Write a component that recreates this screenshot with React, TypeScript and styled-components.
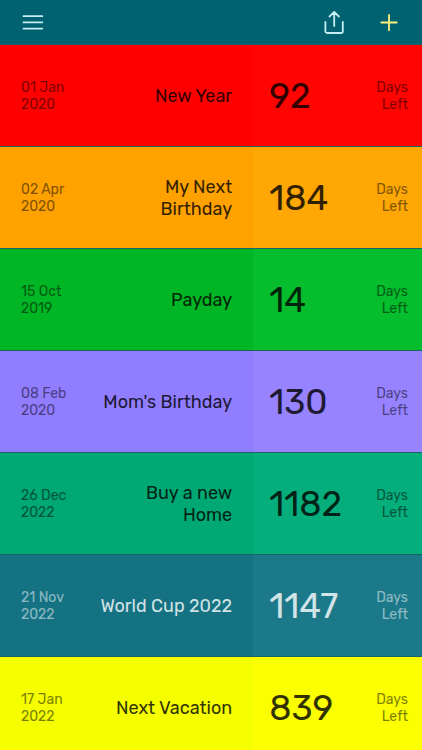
import React from "react";
import styled, { createGlobalStyle } from "styled-components";

const GlobalStyle = createGlobalStyle`
  *, *::before, *::after { box-sizing: border-box; }
  body {
    margin: 0;
    background: #006271;
    font-family: Rubik, Roboto, sans-serif;
  }
`;

const Screen = styled.div`
  display: flex;
  flex-direction: column;
  height: 100vh;
  overflow: hidden;
`;

const Toolbar = styled.header`
  display: flex;
  flex: none;
  align-items: center;
  gap: 23px;
  height: 44px;
  padding: 0 17px;
  background: #006271;
`;

const IconButton = styled.button<{ $tint: string; $pushRight?: boolean }>`
  display: grid;
  place-items: center;
  width: 32px;
  height: 44px;
  margin: 0;
  margin-left: ${(p) => (p.$pushRight ? "auto" : "0")};
  padding: 0;
  border: 0;
  background: none;
  color: ${(p) => p.$tint};
  cursor: pointer;

  svg {
    display: block;
    fill: none;
    stroke: currentColor;
    stroke-linecap: round;
    stroke-linejoin: round;
  }
`;

const Scroller = styled.main`
  flex: 1;
  min-height: 0;
  overflow-y: auto;
  scrollbar-width: none;
`;

const EventList = styled.ul`
  display: grid;
  margin: 0;
  padding: 0;
  list-style: none;
`;

const EventRow = styled.li<{ $left: string; $right: string; $light?: boolean }>`
  display: grid;
  grid-template-columns: 3fr 2fr;
  min-height: 102px;
  color: ${(p) => (p.$light ? "#ffffff" : "#000000")};
  border-top: 1px solid #1a6468;

  > :first-child { background: ${(p) => p.$left}; }
  > :last-child { background: ${(p) => p.$right}; }
`;

const Summary = styled.div`
  display: flex;
  align-items: center;
  justify-content: space-between;
  padding: 0 21px;
`;

const Countdown = styled.div`
  display: flex;
  align-items: center;
  justify-content: space-between;
  padding: 0 14px 0 16px;
`;

const EventDate = styled.time`
  flex: none;
  font-size: 14px;
  line-height: 17px;
  opacity: 0.5;
`;

const Title = styled.h2`
  max-width: 134px;
  margin: 0;
  font-size: 18px;
  font-weight: 400;
  line-height: 22px;
  text-align: right;
  opacity: 0.8;
`;

const Count = styled.span`
  font-size: 35px;
  line-height: 44px;
  opacity: 0.8;
`;

const Unit = styled.span`
  font-size: 14px;
  line-height: 17px;
  text-align: right;
  opacity: 0.5;
`;

type CountdownEvent = {
  day: string;
  year: string;
  iso: string;
  title: string;
  days: number;
  left: string;
  right: string;
  light?: boolean;
};

const events: CountdownEvent[] = [
  { day: "01 Jan", year: "2020", iso: "2020-01-01", title: "New Year", days: 92, left: "#ff0000", right: "#ff0400" },
  { day: "02 Apr", year: "2020", iso: "2020-04-02", title: "My Next Birthday", days: 184, left: "#ffa200", right: "#ffa805" },
  { day: "15 Oct", year: "2019", iso: "2019-10-15", title: "Payday", days: 14, left: "#00b624", right: "#05bd2d" },
  { day: "08 Feb", year: "2020", iso: "2020-02-08", title: "Mom's Birthday", days: 130, left: "#917dff", right: "#9783ff" },
  { day: "26 Dec", year: "2022", iso: "2022-12-26", title: "Buy a new Home", days: 1182, left: "#00a873", right: "#06ae7b" },
  { day: "21 Nov", year: "2022", iso: "2022-11-21", title: "World Cup 2022", days: 1147, left: "#147283", right: "#1b7989", light: true },
  { day: "17 Jan", year: "2022", iso: "2022-01-17", title: "Next Vacation", days: 839, left: "#f5ff00", right: "#fbff00" },
];

export default function App() {
  return (
    <Screen>
      <GlobalStyle />
      <Toolbar>
        <IconButton type="button" aria-label="Menu" $tint="#c4eef2">
          <svg width="24" height="24" viewBox="0 0 24 24" strokeWidth="1.8">
            <path d="M2.500 6.200h18.800M2.500 12.400h18.800M2.500 18.600h18.800" />
          </svg>
        </IconButton>
        <IconButton type="button" aria-label="Share" $tint="#c4eef2" $pushRight>
          <svg width="24" height="26" viewBox="0 0 24 26" strokeWidth="1.800">
            <path d="M3.400 13v9.200a1.800 1.800 0 0 0 1.800 1.800h13.800a1.800 1.800 0 0 0 1.800-1.800v-9.200M12.200 17v-14M7.500 7.500 12.200 2.800l4.700 4.700" />
          </svg>
        </IconButton>
        <IconButton type="button" aria-label="Add event" $tint="#fff080">
          <svg width="18" height="18" viewBox="0 0 18 18" strokeWidth="1.800">
            <path d="M9 1.800v15.400M1.300 9.500h15.400" />
          </svg>
        </IconButton>
      </Toolbar>
      <Scroller>
        <EventList>
          {events.map((event) => (
            <EventRow key={event.iso} $left={event.left} $right={event.right} $light={event.light}>
              <Summary>
                <EventDate dateTime={event.iso}>
                  {event.day}
                  <br />
                  {event.year}
                </EventDate>
                <Title>{event.title}</Title>
              </Summary>
              <Countdown>
                <Count>{event.days}</Count>
                <Unit>
                  Days
                  <br />
                  Left
                </Unit>
              </Countdown>
            </EventRow>
          ))}
        </EventList>
      </Scroller>
    </Screen>
  );
}
